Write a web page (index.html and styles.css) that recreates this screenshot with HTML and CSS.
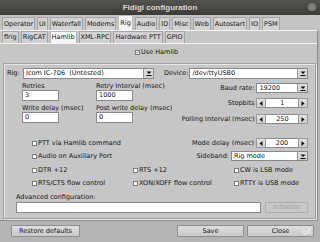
FILE: index.html
```html
<!DOCTYPE html>
<html>
<head>
<meta charset="utf-8">
<title>Fldigi configuration</title>
<link rel="stylesheet" href="styles.css">
</head>
<body>
<div class="win">
  <div class="titlebar">
    <span class="title">Fldigi configuration</span>
    <span class="closebtn"></span>
  </div>
  <div class="tabs1">
    <span class="tab">Operator</span>
    <span class="tab">UI</span>
    <span class="tab">Waterfall</span>
    <span class="tab">Modems</span>
    <span class="tab active">Rig</span>
    <span class="tab">Audio</span>
    <span class="tab">ID</span>
    <span class="tab">Misc</span>
    <span class="tab">Web</span>
    <span class="tab">Autostart</span>
    <span class="tab">IO</span>
    <span class="tab">PSM</span>
  </div>
  <div class="panel1">
    <div class="tabs2">
      <span class="tab">flrig</span>
      <span class="tab">RigCAT</span>
      <span class="tab active">Hamlib</span>
      <span class="tab">XML-RPC</span>
      <span class="tab">Hardware PTT</span>
      <span class="tab">GPIO</span>
    </div>
    <div class="panel2">
      <div class="usehamlib"><span class="cb checked"><svg width="5" height="5" viewBox="0 0 5 5"><path d="M0.8 2.4 L2 3.6 L4.2 1" fill="none" stroke="#222" stroke-width="0.9"/></svg></span>Use Hamlib</div>
      <div class="frame">
        <div class="blockA">
          <div class="colL">
            <div class="rigrow">
              <span class="riglbl">Rig:</span>
              <div class="combo w-rig"><span class="val">Icom IC-706&nbsp; (Untested)</span><span class="ddbtn"><svg width="6" height="5" viewBox="0 0 6 5"><path d="M0.5 0.5 H5.5 L3 3 Z" fill="#111"/><rect x="0.5" y="4" width="5" height="1" fill="#111"/></svg></span></div>
            </div>
            <div class="pairs">
              <div class="field"><div class="lbl">Retries</div><div class="input">3</div></div>
              <div class="field"><div class="lbl">Retry Interval (msec)</div><div class="input">1000</div></div>
              <div class="field"><div class="lbl">Write delay (msec)</div><div class="input">0</div></div>
              <div class="field"><div class="lbl">Post write delay (msec)</div><div class="input">0</div></div>
            </div>
          </div>
          <div class="colR">
            <div class="rrow devrow">
              <span class="rlbl">Device:</span>
              <div class="combo w-dev"><span class="val">/dev/ttyUSB0</span><span class="ddbtn"><svg width="6" height="5" viewBox="0 0 6 5"><path d="M0.5 0.5 H5.5 L3 3 Z" fill="#111"/><rect x="0.5" y="4" width="5" height="1" fill="#111"/></svg></span></div>
            </div>
            <div class="rrow r-baud">
              <span class="rlbl">Baud rate:</span>
              <div class="combo w-ctl"><span class="val">19200</span><span class="ddbtn"><svg width="6" height="5" viewBox="0 0 6 5"><path d="M0.5 0.5 H5.5 L3 3 Z" fill="#111"/><rect x="0.5" y="4" width="5" height="1" fill="#111"/></svg></span></div>
            </div>
            <div class="rrow r-stop">
              <span class="rlbl">Stopbits</span>
              <div class="spin w-ctl"><span class="sbtn"><svg width="4" height="5" viewBox="0 0 4 5"><path d="M3.5 0 V5 L0.5 2.5 Z" fill="#111"/></svg></span><span class="sval">1</span><span class="sbtn"><svg width="4" height="5" viewBox="0 0 4 5"><path d="M0.5 0 V5 L3.5 2.5 Z" fill="#111"/></svg></span></div>
            </div>
            <div class="rrow r-poll">
              <span class="rlbl">Polling Interval (msec)</span>
              <div class="spin w-ctl"><span class="sbtn"><svg width="4" height="5" viewBox="0 0 4 5"><path d="M3.5 0 V5 L0.5 2.5 Z" fill="#111"/></svg></span><span class="sval">250</span><span class="sbtn"><svg width="4" height="5" viewBox="0 0 4 5"><path d="M0.5 0 V5 L3.5 2.5 Z" fill="#111"/></svg></span></div>
            </div>
          </div>
        </div>
        <div class="blockB">
          <div class="checks">
            <div class="chk"><span class="cb"></span>PTT via Hamlib command</div>
            <div class="chk chk2"><span class="cb"></span>Audio on Auxiliary Port</div>
          </div>
          <div class="colR">
            <div class="rrow">
              <span class="rlbl">Mode delay (msec)</span>
              <div class="spin w-ctl"><span class="sbtn"><svg width="4" height="5" viewBox="0 0 4 5"><path d="M3.5 0 V5 L0.5 2.5 Z" fill="#111"/></svg></span><span class="sval">200</span><span class="sbtn"><svg width="4" height="5" viewBox="0 0 4 5"><path d="M0.5 0 V5 L3.5 2.5 Z" fill="#111"/></svg></span></div>
            </div>
            <div class="rrow r-side">
              <span class="rlbl">Sideband:</span>
              <div class="combo w-side"><span class="val">Rig mode</span><span class="ddbtn"><svg width="6" height="5" viewBox="0 0 6 5"><path d="M0.5 0.5 H5.5 L3 3 Z" fill="#111"/><rect x="0.5" y="4" width="5" height="1" fill="#111"/></svg></span></div>
            </div>
          </div>
        </div>
        <div class="blockC">
          <div class="chk"><span class="cb"></span>DTR +12</div>
          <div class="chk"><span class="cb"></span>RTS +12</div>
          <div class="chk"><span class="cb"></span>CW is LSB mode</div>
          <div class="chk"><span class="cb"></span>RTS/CTS flow control</div>
          <div class="chk"><span class="cb"></span>XON/XOFF flow control</div>
          <div class="chk"><span class="cb"></span>RTTY is USB mode</div>
        </div>
        <div class="blockD">
          <div class="advlbl">Advanced configuration:</div>
          <div class="advrow">
            <div class="input advinput"></div>
            <div class="btn disabled initbtn">Initialize</div>
          </div>
        </div>
      </div>
    </div>
  </div>
  <div class="footer">
    <div class="btn restore">Restore defaults</div>
    <div class="btn save">Save</div>
    <div class="btn close">Close<svg class="reticon" width="10" height="8" viewBox="0 0 10 8"><path d="M7.5 0.5 H9 V5 H4 V7 L1 4.3 L4 1.8 V3.6 H7.5 Z" fill="none" stroke="#f2f2f2" stroke-width="0.8"/></svg></div>
  </div>
</div>
</body>
</html>
```
FILE: styles.css
```css
* { box-sizing: border-box; }
html, body { margin: 0; padding: 0; }
body {
  font-family: "DejaVu Sans", sans-serif;
  font-size: 6.5px;
  line-height: 1;
  color: #141414;
  background: #b4b4b4;
}
.win {
  width: 320px;
  height: 242px;
  background: #b4b4b4;
  display: flex;
  flex-direction: column;
  overflow: hidden;
}
.titlebar {
  height: 15px;
  flex: none;
  background: linear-gradient(#55544f, #3c3b37);
  display: flex;
  align-items: center;
  justify-content: center;
  position: relative;
}
.title {
  font-family: "Liberation Sans", sans-serif;
  font-weight: bold;
  font-size: 8px;
  color: #dcd8cf;
}
.closebtn {
  position: absolute;
  left: 308px;
  top: 3px;
  width: 8px;
  height: 8px;
  border-radius: 50%;
  background: #7e7c77;
}
.tabs1 {
  height: 15px;
  flex: none;
  display: flex;
  align-items: flex-end;
  gap: 2px;
  padding-left: 2px;
  background: #c4c4c4;
}
.tab {
  height: 13px;
  padding: 0 1px;
  background: #d2d2d2;
  border: 1px solid #a4a4a4;
  border-bottom: none;
  display: flex;
  align-items: center;
  white-space: nowrap;
}
.tab.active {
  height: 15px;
  background: #f4f4f4;
  border-color: #b8b8b8;
}
.panel1 {
  flex: none;
  width: 318px;
  height: 191px;
  background: #c6c6c6;
  border-top: 1px solid #f4f4f4;
  border-right: 1px solid #8e8e8e;
  display: flex;
  flex-direction: column;
}
.tabs2 {
  height: 12px;
  flex: none;
  display: flex;
  align-items: flex-end;
  gap: 2px;
  padding-left: 2px;
}
.tabs2 .tab { height: 12px; }
.tabs2 .tab.active { height: 12px; background: #f8f8f8; }
.panel2 {
  flex: 1;
  border-top: 1px solid #f4f4f4;
  border-bottom: 1px solid #8e8e8e;
  background: #c6c6c6;
}
.usehamlib {
  margin: 5px 0 0 135px;
  height: 7px;
  display: flex;
  align-items: center;
}
.cb {
  width: 5px;
  height: 5px;
  flex: none;
  background: #fff;
  border: 0.5px solid #7c7c7c;
  margin-right: 1px;
  display: inline-flex;
  align-items: center;
  justify-content: center;
}
.cb svg { display: block; }
.frame {
  margin: 7px 0 0 3px;
  width: 313px;
  height: 156px;
  border: 1px solid #a0a0a0;
  box-shadow: inset 1px 1px 0 #e6e6e6, 1px 1px 0 #e6e6e6;
  display: flex;
  flex-direction: column;
}
.blockA {
  margin-top: 4px;
  display: flex;
  align-items: flex-start;
}
.colL {
  padding-left: 3px;
  width: 160px;
  flex: none;
}
.rigrow {
  height: 11px;
  display: flex;
  align-items: center;
}
.riglbl { width: 16px; }
.combo {
  height: 11px;
  display: flex;
  background: #fff;
  border: 1px solid #8a8a8a;
  align-items: stretch;
}
.combo .val {
  flex: 1;
  display: flex;
  align-items: center;
  padding-left: 2px;
  white-space: nowrap;
  overflow: hidden;
}
.ddbtn {
  width: 10px;
  flex: none;
  background: linear-gradient(#e2e2e2, #cdcdcd);
  border-left: 1px solid #9a9a9a;
  display: flex;
  align-items: center;
  justify-content: center;
}
.w-rig { width: 131px; }
.w-dev { width: 119px; }
.w-ctl { width: 52px; height: 10px; }
.w-side { width: 77px; height: 10px; }
.pairs {
  margin-left: 15px;
  display: grid;
  grid-template-columns: 74px 74px;
}
.lbl {
  height: 8px;
  margin-top: 3px;
  display: flex;
  align-items: center;
  white-space: nowrap;
}
.input {
  height: 11px;
  width: 37px;
  background: #fff;
  border: 1px solid #8a8a8a;
  display: flex;
  align-items: center;
  padding-left: 2px;
}
.colR {
  margin-left: auto;
  padding-right: 7px;
  display: flex;
  flex-direction: column;
  align-items: flex-end;
}
.rrow {
  height: 10px;
  display: flex;
  align-items: center;
  justify-content: flex-end;
  white-space: nowrap;
}
.rlbl { margin-right: 2px; }
.devrow { height: 11px; }
.devrow .rlbl { margin-right: 1px; }
.r-baud { margin-top: 4px; }
.r-stop { margin-top: 5px; }
.r-poll { margin-top: 6px; }
.r-side { margin-top: 3px; }
.spin {
  display: flex;
  height: 10px;
}
.sbtn {
  width: 10px;
  flex: none;
  background: linear-gradient(#e2e2e2, #cdcdcd);
  border: 1px solid #9a9a9a;
  display: flex;
  align-items: center;
  justify-content: center;
}
.sval {
  flex: 1;
  background: #fff;
  border-top: 1px solid #8a8a8a;
  border-bottom: 1px solid #8a8a8a;
  display: flex;
  align-items: center;
  justify-content: center;
}
.blockB {
  margin-top: 14px;
  display: flex;
  align-items: flex-start;
}
.checks { padding-left: 28px; }
.chk {
  height: 10px;
  display: flex;
  align-items: center;
  white-space: nowrap;
}
.chk2 { margin-top: 3px; }
.blockC {
  margin-top: 4px;
  padding-left: 28px;
  display: grid;
  grid-template-columns: 101px 101px 101px;
  row-gap: 3px;
}
.blockD {
  margin-top: 5px;
  padding-left: 12px;
}
.advlbl {
  height: 8px;
  display: flex;
  align-items: center;
}
.advrow {
  margin-top: 1px;
  display: flex;
  gap: 4px;
}
.advinput { width: 245px; }
.btn {
  height: 12px;
  background: linear-gradient(#dedede, #c9c9c9);
  border: 1px solid #8e8e8e;
  border-radius: 1px;
  display: flex;
  align-items: center;
  justify-content: center;
  white-space: nowrap;
  position: relative;
}
.initbtn {
  width: 43px;
  height: 11px;
  background: #c8c8c8;
  border-color: #adadad;
}
.disabled { color: #a2a2a2; }
.footer {
  flex: none;
  display: flex;
  padding: 4px 0 0 11px;
}
.restore { width: 69px; }
.save { width: 67px; margin-left: 97px; }
.close { width: 67px; margin-left: 3px; }
.reticon {
  position: absolute;
  right: 2px;
  top: 2px;
}
```
